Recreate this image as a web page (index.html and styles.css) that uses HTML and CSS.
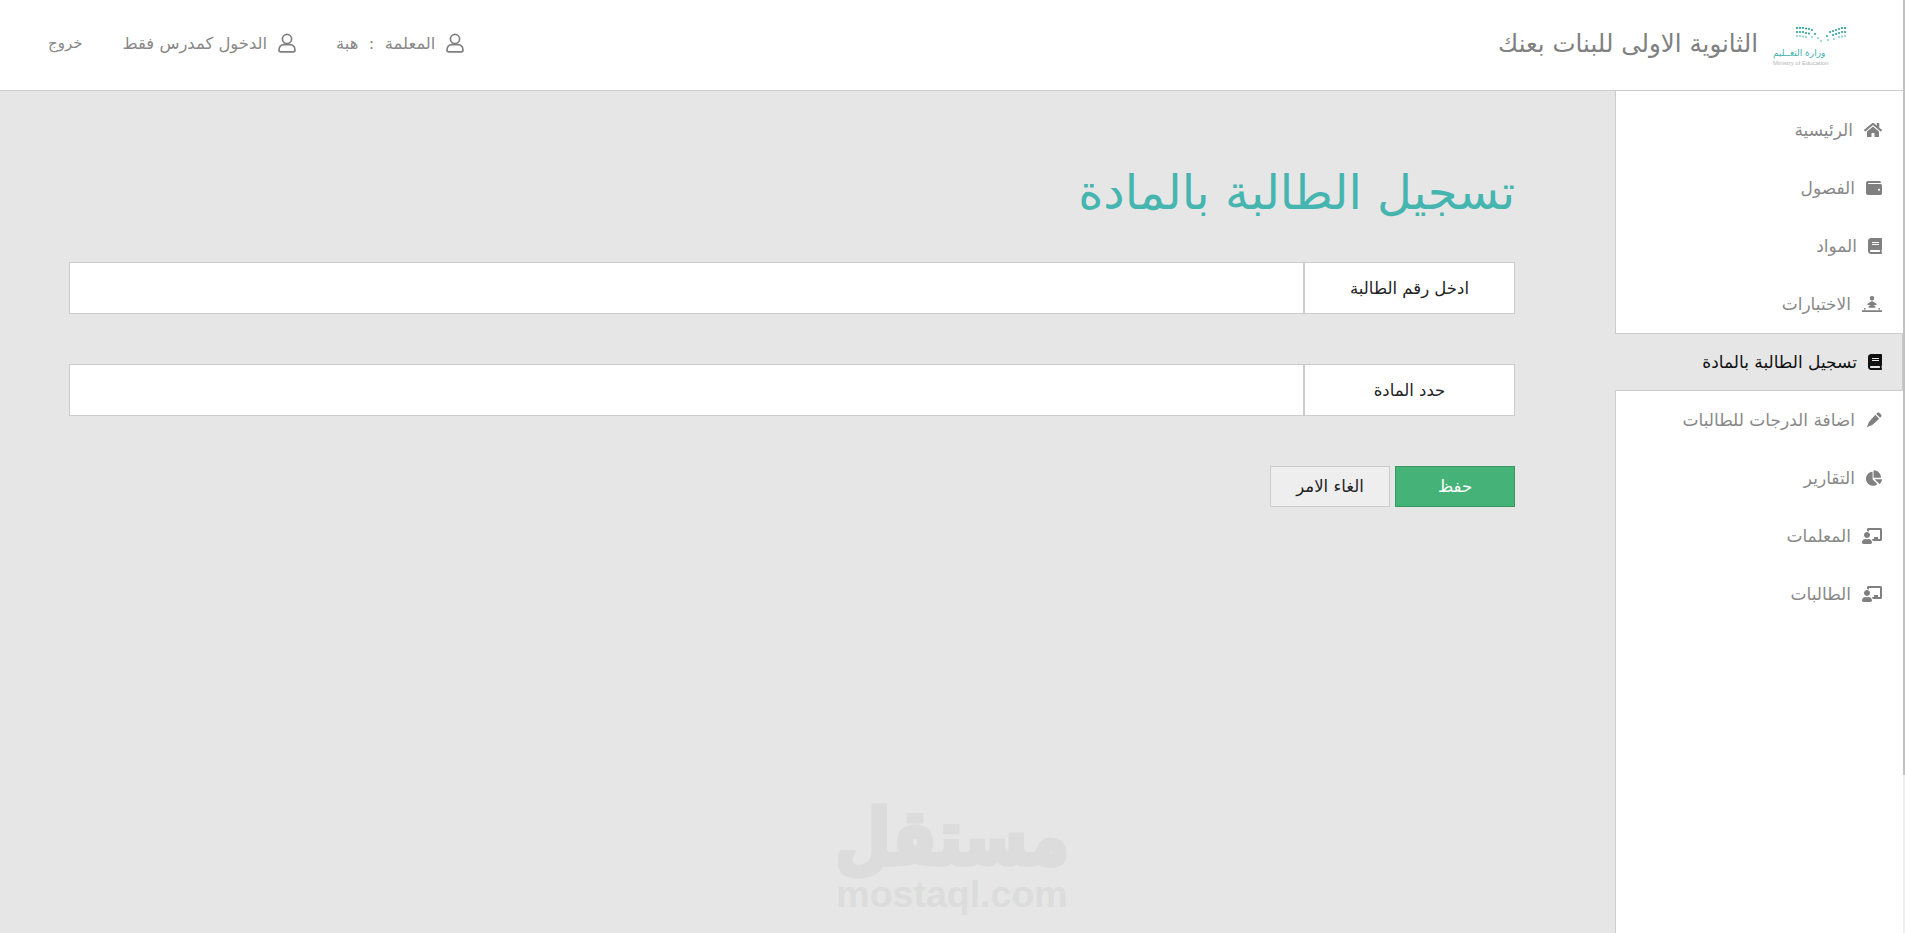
FILE: index.html
```html
<!DOCTYPE html>
<html lang="ar" dir="rtl">
<head>
    <meta charset="UTF-8">
    <title>تسجيل الطالبة بالمادة</title>
    <link rel="stylesheet" href="styles.css">
</head>
<body>

<div class="scrollbar"><div class="scrollbar-thumb"></div></div>

<div class="page">
<header class="topbar">
    <div class="brand">
        <div class="logo">
            <svg class="logo-dots" viewBox="0 0 50 16" width="50" height="16">
                <g fill="#2fa5a0">
                    <circle cx="1" cy="1" r="1.100"/><circle cx="4" cy="1" r="1.100"/><circle cx="7" cy="1" r="1.100"/><circle cx="10" cy="1.500" r="1.100"/><circle cx="13" cy="2" r="1.100"/><circle cx="16" cy="3" r="1.100"/>
                    <circle cx="1" cy="5" r="1.100"/><circle cx="4" cy="5" r="1.100"/><circle cx="7" cy="5" r="1.100"/><circle cx="10" cy="6" r="1.100"/><circle cx="13" cy="6.500" r="1.100"/><circle cx="19" cy="7" r="1.100"/>
                    <circle cx="49" cy="1" r="1.100"/><circle cx="46" cy="1" r="1.100"/><circle cx="43" cy="2" r="1.100"/><circle cx="40" cy="3" r="1.100"/><circle cx="37" cy="4" r="1.100"/><circle cx="34" cy="5" r="1.100"/>
                    <circle cx="49" cy="5" r="1.100"/><circle cx="46" cy="5" r="1.100"/><circle cx="43" cy="6" r="1.100"/><circle cx="40" cy="7" r="1.100"/><circle cx="37" cy="8" r="1.100"/><circle cx="31" cy="9" r="1.100"/>
                </g>
                <g fill="#8fd0cc">
                    <circle cx="1" cy="9" r="1.100"/><circle cx="4" cy="9" r="1.100"/><circle cx="7" cy="9.500" r="1.100"/><circle cx="10" cy="10" r="1.100"/><circle cx="16" cy="10" r="1.100"/><circle cx="22" cy="11" r="1.100"/><circle cx="25" cy="14" r="1.100"/>
                    <circle cx="49" cy="9" r="1.100"/><circle cx="46" cy="9.500" r="1.100"/><circle cx="43" cy="10" r="1.100"/><circle cx="38" cy="12" r="1.100"/><circle cx="32" cy="13" r="1.100"/>
                </g>
            </svg>
            <span class="logo-ar">وزارة التعــليم</span>
            <span class="logo-en" dir="ltr">Ministry of Education</span>
        </div>
        <span class="brand-name">الثانوية الاولى للبنات بعنك</span>
    </div>
    <nav class="top-links">
        <a class="top-link">
            <svg class="user-icon" viewBox="0 0 18 20"><circle cx="9" cy="6" r="4.600"/><path d="M1 17c0-3.600 2.400-5.400 5-5.400h6c2.600 0 5 1.800 5 5.400 0 1.200-.7 1.900-1.800 1.900H2.800C1.700 18.900 1 18.200 1 17z"/></svg>
            <span>المعلمة &nbsp;:&nbsp; هبة</span>
        </a>
        <a class="top-link">
            <svg class="user-icon" viewBox="0 0 18 20"><circle cx="9" cy="6" r="4.600"/><path d="M1 17c0-3.600 2.400-5.400 5-5.400h6c2.600 0 5 1.800 5 5.400 0 1.200-.7 1.900-1.800 1.900H2.800C1.700 18.900 1 18.200 1 17z"/></svg>
            <span>الدخول كمدرس فقط</span>
        </a>
        <a class="top-link top-link-exit">خروج</a>
    </nav>
</header>

<div class="layout">
    <aside class="sidebar">
        <a class="side-item">
            <svg class="side-icon side-icon-home" viewBox="0 0 576 512"><path d="M280.37 148.26L96 300.11V464a16 16 0 0 0 16 16l112.06-.29a16 16 0 0 0 15.92-16V368a16 16 0 0 1 16-16h64a16 16 0 0 1 16 16v95.64a16 16 0 0 0 16 16.05L464 480a16 16 0 0 0 16-16V300L295.67 148.26a12.19 12.19 0 0 0-15.3 0zM571.6 251.47L488 182.56V44.05a12 12 0 0 0-12-12h-56a12 12 0 0 0-12 12v72.61L318.47 43a48 48 0 0 0-61 0L4.34 251.47a12 12 0 0 0-1.6 16.9l25.5 31A12 12 0 0 0 45.15 301l235.22-193.74a12.19 12.19 0 0 1 15.3 0L530.9 301a12 12 0 0 0 16.9-1.6l25.5-31a12 12 0 0 0-1.7-16.93z"/></svg>
            الرئيسية
        </a>
        <a class="side-item">
            <svg class="side-icon" viewBox="0 0 512 512"><path d="M461.2 128H80c-8.84 0-16-7.16-16-16s7.16-16 16-16h384c8.84 0 16-7.16 16-16 0-26.51-21.49-48-48-48H64C28.650 32 0 60.650 0 96v320c0 35.350 28.650 64 64 64h397.200c28.020 0 50.800-21.530 50.800-48V176c0-26.470-22.780-48-50.800-48zM416 340c-17.670 0-32-14.330-32-32s14.330-32 32-32 32 14.330 32 32-14.330 32-32 32z"/></svg>
            الفصول
        </a>
        <a class="side-item">
            <svg class="side-icon side-icon-book" viewBox="0 0 448 512"><path d="M448 360V24c0-13.300-10.700-24-24-24H96C43 0 0 43 0 96v320c0 53 43 96 96 96h328c13.300 0 24-10.700 24-24v-16c0-7.500-3.500-14.300-8.900-18.700-4.200-15.400-4.200-59.300 0-74.700 5.400-4.300 8.900-11.100 8.900-18.600zM128 134c0-3.300 2.700-6 6-6h212c3.300 0 6 2.700 6 6v20c0 3.300-2.700 6-6 6H134c-3.300 0-6-2.700-6-6v-20zm0 64c0-3.300 2.700-6 6-6h212c3.300 0 6 2.700 6 6v20c0 3.300-2.700 6-6 6H134c-3.300 0-6-2.700-6-6v-20zm253.400 250H96c-17.700 0-32-14.300-32-32 0-17.600 14.400-32 32-32h285.400c-1.900 17.100-1.900 46.900 0 64z"/></svg>
            المواد
        </a>
        <a class="side-item">
            <svg class="side-icon side-icon-wide" viewBox="0 0 640 512"><path d="M320 144a72 72 0 1 0 0-144 72 72 0 0 0 0 144zM0 456h640v56H0zM180 250l100-70c25-16 55-16 80 0l100 70c16 12 10 34-8 36l-92 10 60 30c24 12 16 50-12 50H232c-28 0-36-38-12-50l60-30-92-10c-18-2-24-24-8-36zM90 380a30 30 0 1 0 0 60 30 30 0 0 0 0-60zM550 380a30 30 0 1 0 0 60 30 30 0 0 0 0-60z"/></svg>
            الاختبارات
        </a>
        <a class="side-item side-item-active">
            <svg class="side-icon side-icon-book" viewBox="0 0 448 512"><path d="M448 360V24c0-13.300-10.700-24-24-24H96C43 0 0 43 0 96v320c0 53 43 96 96 96h328c13.300 0 24-10.700 24-24v-16c0-7.500-3.500-14.300-8.900-18.700-4.200-15.400-4.200-59.300 0-74.700 5.400-4.300 8.900-11.100 8.900-18.600zM128 134c0-3.300 2.700-6 6-6h212c3.300 0 6 2.700 6 6v20c0 3.300-2.700 6-6 6H134c-3.300 0-6-2.700-6-6v-20zm0 64c0-3.300 2.700-6 6-6h212c3.300 0 6 2.700 6 6v20c0 3.300-2.700 6-6 6H134c-3.300 0-6-2.700-6-6v-20zm253.400 250H96c-17.700 0-32-14.300-32-32 0-17.600 14.400-32 32-32h285.400c-1.900 17.100-1.900 46.900 0 64z"/></svg>
            تسجيل الطالبة بالمادة
        </a>
        <a class="side-item">
            <svg class="side-icon" viewBox="0 0 512 512"><path d="M360 30c20-20 52-20 72 0l50 50c20 20 20 52 0 72L450 184 328 62zM300 90l122 122L220 400c-30 28-70 42-110 46L20 492 66 402c4-40 18-80 46-110z"/></svg>
            اضافة الدرجات للطالبات
        </a>
        <a class="side-item">
            <svg class="side-icon" viewBox="0 -16 544 528"><path d="M527.800 288H290.500l158 158c6 6 16 6.500 22.300.7 38.700-36.500 65.300-85.700 73.100-140.900 1.400-9.500-6.700-17.800-16.100-17.800zM511.900 223.200C503.900 96.600 402.700-4.600 276.100-12.600c-9.700-.6-20.100 7.500-20.100 17.300V240h227.400c9.700 0 28.500-7.100 28.500-16.800zM224 288V54.700c0-9.400-8.300-17.500-17.600-16.200C88.600 55.200-2.100 158.200 0 282 2.200 409.300 111.800 513.700 239.100 512c50-.7 96.200-16.800 134.300-43.800 7.800-5.500 8.400-17 1.600-23.800z"/></svg>
            التقارير
        </a>
        <a class="side-item">
            <svg class="side-icon side-icon-wide" viewBox="0 0 640 512"><path d="M208 352c-2.390 0-4.780.35-7.060 1.090C187.980 357.300 174.350 360 160 360c-14.350 0-27.980-2.700-40.950-6.910-2.280-.74-4.660-1.090-7.050-1.090C49.940 352-.33 402.480 0 464.620.14 490.880 21.730 512 48 512h224c26.270 0 47.860-21.120 48-47.380.33-62.140-49.940-112.620-112-112.620zm-48-32c53.020 0 96-42.980 96-96s-42.980-96-96-96-96 42.980-96 96 42.980 96 96 96zM592 0H208c-26.470 0-48 22.250-48 49.590V96c23.420 0 45.100 6.780 64 17.800V64h352v288h-64v-64H384v64h-76.240c19.100 16.690 33.120 38.730 39.690 64H592c26.470 0 48-22.250 48-49.590V49.590C640 22.250 618.470 0 592 0z"/></svg>
            المعلمات
        </a>
        <a class="side-item">
            <svg class="side-icon side-icon-wide" viewBox="0 0 640 512"><path d="M208 352c-2.390 0-4.780.35-7.060 1.090C187.980 357.300 174.350 360 160 360c-14.350 0-27.980-2.700-40.950-6.910-2.280-.74-4.660-1.090-7.050-1.090C49.940 352-.33 402.480 0 464.620.14 490.880 21.730 512 48 512h224c26.270 0 47.860-21.120 48-47.380.33-62.140-49.940-112.620-112-112.620zm-48-32c53.020 0 96-42.980 96-96s-42.980-96-96-96-96 42.980-96 96 42.980 96 96 96zM592 0H208c-26.470 0-48 22.250-48 49.590V96c23.420 0 45.100 6.780 64 17.800V64h352v288h-64v-64H384v64h-76.240c19.100 16.690 33.120 38.730 39.690 64H592c26.470 0 48-22.250 48-49.590V49.590C640 22.250 618.470 0 592 0z"/></svg>
            الطالبات
        </a>
    </aside>

    <main class="content">
        <h1 class="page-title">تسجيل الطالبة بالمادة</h1>
        <form class="enroll-form">
            <div class="field">
                <label class="field-label" for="student-id">ادخل رقم الطالبة</label>
                <input class="field-input" id="student-id" type="text">
            </div>
            <div class="field">
                <label class="field-label" for="subject">حدد المادة</label>
                <input class="field-input" id="subject" type="text">
            </div>
            <div class="actions">
                <button type="button" class="btn btn-save">حفظ</button>
                <button type="button" class="btn btn-cancel">الغاء الامر</button>
            </div>
        </form>
        <div class="watermark">
            <span class="watermark-ar">مستقل</span>
            <span class="watermark-en" dir="ltr">mostaql.com</span>
        </div>
    </main>
</div>
</div>

</body>
</html>
```

FILE: styles.css
```css
* {
    box-sizing: border-box;
}

html, body {
    height: 100%;
}

body {
    display: flex;
    margin: 0;
    font-family: "DejaVu Sans", sans-serif;
    background-color: #fff;
    overflow: hidden;
}

.scrollbar {
    flex: 0 0 2px;
    background-color: #f0f0f0;
}

.scrollbar-thumb {
    height: 775px;
    background-color: #c1c1c1;
}

.page {
    flex: 1;
    min-width: 0;
    height: 100%;
}

.topbar {
    display: flex;
    justify-content: space-between;
    align-items: center;
    height: 91px;
    padding: 0 57px 4px 48px;
    background: #fff;
    border-bottom: 1px solid #ccc;
}

.brand {
    display: flex;
    align-items: center;
    gap: 15px;
}

.logo {
    display: flex;
    flex-direction: column;
    width: 73px;
    height: 40px;
    margin-top: 8px;
}

.logo-dots {
    align-self: flex-start;
}

.logo-ar {
    margin-top: 5px;
    align-self: flex-end;
    font-size: 9px;
    line-height: 11px;
    color: #3fb1ad;
}

.logo-en {
    align-self: flex-end;
    font-family: "Liberation Sans", sans-serif;
    font-size: 6px;
    line-height: 8px;
    color: #b5b5b5;
}

.brand-name {
    font-size: 24.5px;
    color: #808080;
}

.top-links {
    display: flex;
    align-items: center;
    gap: 40px;
}

.top-link {
    display: flex;
    align-items: center;
    gap: 11px;
    font-size: 16.400px;
    color: #888;
}

.top-link-exit {
    font-size: 15px;
}

.user-icon {
    width: 18px;
    height: 20px;
    fill: none;
    stroke: #808080;
    stroke-width: 1.7;
}

.layout {
    display: flex;
    height: calc(100% - 91px);
    background-color: #e6e6e6;
}

.sidebar {
    flex: 0 0 288px;
    padding-top: 10px;
    background: #fff;
    border-left: 1px solid #ccc;
}

.side-item {
    display: flex;
    align-items: center;
    gap: 11px;
    height: 58px;
    padding-right: 21px;
    font-size: 17px;
    color: #888;
}

.side-item-active {
    margin-left: -1px;
    background-color: #e6e6e6;
    border-top: 1px solid #ccc;
    border-bottom: 1px solid #ccc;
    border-right: 1px solid #ccc;
    padding-right: 20px;
    color: #111;
}

.side-icon {
    flex: none;
    width: 16px;
    height: 16px;
    fill: #808080;
}

.side-icon-home {
    width: 18px;
}

.side-icon-book {
    width: 14px;
}

.side-icon-wide {
    width: 20px;
}

.side-item-active .side-icon {
    fill: #111;
}

.content {
    position: relative;
    flex: 1;
    padding: 0 100px 0 69px;
}

.page-title {
    margin: 69px 0 0;
    height: 64px;
    font-size: 48px;
    line-height: 64px;
    font-weight: normal;
    color: #45b5b0;
}

.enroll-form {
    margin-top: 38px;
}

.field {
    display: flex;
    height: 52px;
    margin-bottom: 50px;
}

.field-label {
    flex: 0 0 211px;
    display: flex;
    align-items: center;
    justify-content: center;
    background: #fff;
    border: 1px solid #ccc;
    font-size: 16.500px;
    color: #222;
}

.field-input {
    flex: 1;
    background: #fff;
    border: 1px solid #ccc;
}

.actions {
    display: flex;
    gap: 5px;
}

.btn {
    width: 120px;
    height: 41px;
    font-family: inherit;
    font-size: 16.500px;
    border: 1px solid #ccc;
}

.btn-save {
    background-color: #45b278;
    border-color: #38985f;
    color: #fff;
}

.btn-cancel {
    background-color: #eee;
    color: #222;
}

.watermark {
    position: absolute;
    left: 836px;
    bottom: 19px;
    display: flex;
    flex-direction: column;
    align-items: center;
    width: 232px;
    color: #dcdcdc;
    font-weight: bold;
}

.watermark-ar {
    font-size: 64px;
    line-height: 72px;
    -webkit-text-stroke: 4px #dcdcdc;
    transform: scaleY(1.2);
}

.watermark-en {
    font-family: "Liberation Sans", sans-serif;
    font-size: 37.500px;
    line-height: 40px;
}
```
